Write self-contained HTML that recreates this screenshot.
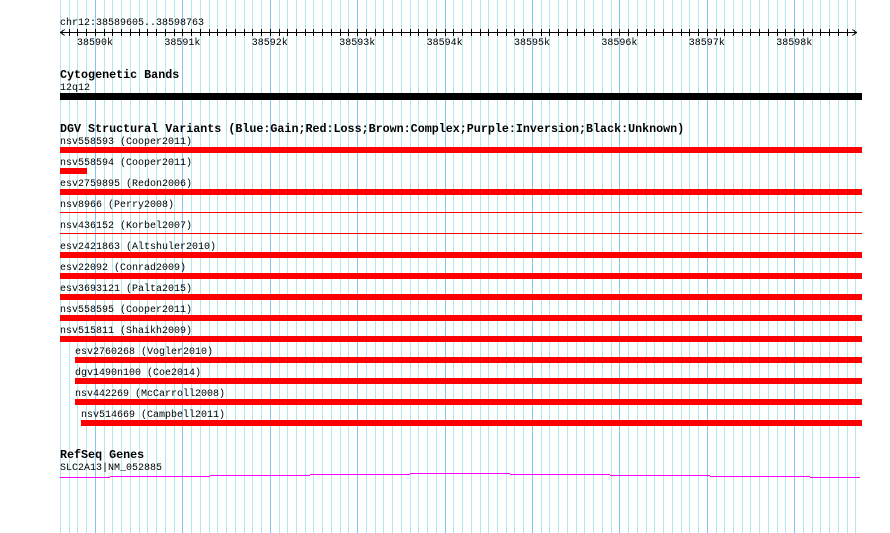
<!DOCTYPE html>
<html><head><meta charset="utf-8"><style>
html,body{margin:0;padding:0;background:#fff;}
svg{display:block;}
text{font-family:"Liberation Mono","DejaVu Sans Mono",monospace;font-size:10px;fill:#000;}
.b{font-weight:bold;font-size:11.7px;}
</style></head><body>
<svg width="890" height="533" viewBox="0 0 890 533" xmlns="http://www.w3.org/2000/svg" shape-rendering="crispEdges">
<path stroke="#aee9ee" stroke-width="1" fill="none" d="M60.5 0V533M69.5 0V533M77.5 0V533M86.5 0V533M104.5 0V533M112.5 0V533M121.5 0V533M130.5 0V533M139.5 0V533M147.5 0V533M156.5 0V533M165.5 0V533M174.5 0V533M191.5 0V533M200.5 0V533M209.5 0V533M217.5 0V533M226.5 0V533M235.5 0V533M244.5 0V533M252.5 0V533M261.5 0V533M279.5 0V533M287.5 0V533M296.5 0V533M305.5 0V533M313.5 0V533M322.5 0V533M331.5 0V533M340.5 0V533M348.5 0V533M366.5 0V533M375.5 0V533M383.5 0V533M392.5 0V533M401.5 0V533M410.5 0V533M418.5 0V533M427.5 0V533M436.5 0V533M453.5 0V533M462.5 0V533M471.5 0V533M480.5 0V533M488.5 0V533M497.5 0V533M506.5 0V533M514.5 0V533M523.5 0V533M541.5 0V533M549.5 0V533M558.5 0V533M567.5 0V533M576.5 0V533M584.5 0V533M593.5 0V533M602.5 0V533M611.5 0V533M628.5 0V533M637.5 0V533M646.5 0V533M654.5 0V533M663.5 0V533M672.5 0V533M681.5 0V533M689.5 0V533M698.5 0V533M716.5 0V533M724.5 0V533M733.5 0V533M742.5 0V533M750.5 0V533M759.5 0V533M768.5 0V533M777.5 0V533M785.5 0V533M803.5 0V533M812.5 0V533M820.5 0V533M829.5 0V533M838.5 0V533M847.5 0V533M855.5 0V533"/>
<path stroke="#80c8ea" stroke-width="1" fill="none" d="M95.5 0V533M182.5 0V533M270.5 0V533M357.5 0V533M445.5 0V533M532.5 0V533M619.5 0V533M707.5 0V533M794.5 0V533"/>
<text x="60" y="25">chr12:38589605..38598763</text>
<path stroke="#000" stroke-width="1" fill="none" d="M60 32.5H857M69.5 29V36M77.5 29V36M86.5 29V36M95.5 29V36M104.5 29V36M112.5 29V36M121.5 29V36M130.5 29V36M139.5 29V36M147.5 29V36M156.5 29V36M165.5 29V36M174.5 29V36M182.5 29V36M191.5 29V36M200.5 29V36M209.5 29V36M217.5 29V36M226.5 29V36M235.5 29V36M244.5 29V36M252.5 29V36M261.5 29V36M270.5 29V36M279.5 29V36M287.5 29V36M296.5 29V36M305.5 29V36M313.5 29V36M322.5 29V36M331.5 29V36M340.5 29V36M348.5 29V36M357.5 29V36M366.5 29V36M375.5 29V36M383.5 29V36M392.5 29V36M401.5 29V36M410.5 29V36M418.5 29V36M427.5 29V36M436.5 29V36M445.5 29V36M453.5 29V36M462.5 29V36M471.5 29V36M480.5 29V36M488.5 29V36M497.5 29V36M506.5 29V36M514.5 29V36M523.5 29V36M532.5 29V36M541.5 29V36M549.5 29V36M558.5 29V36M567.5 29V36M576.5 29V36M584.5 29V36M593.5 29V36M602.5 29V36M611.5 29V36M619.5 29V36M628.5 29V36M637.5 29V36M646.5 29V36M654.5 29V36M663.5 29V36M672.5 29V36M681.5 29V36M689.5 29V36M698.5 29V36M707.5 29V36M716.5 29V36M724.5 29V36M733.5 29V36M742.5 29V36M750.5 29V36M759.5 29V36M768.5 29V36M777.5 29V36M785.5 29V36M794.5 29V36M803.5 29V36M812.5 29V36M820.5 29V36M829.5 29V36M838.5 29V36M847.5 29V36M60.5 32.5L64.5 29.5M60.5 32.5L64.5 35.5M856.5 32.5L852.5 29.5M856.5 32.5L852.5 35.5"/>
<g text-anchor="middle">
<text x="95" y="45">38590k</text><text x="182.4" y="45">38591k</text><text x="269.8" y="45">38592k</text>
<text x="357.2" y="45">38593k</text><text x="444.6" y="45">38594k</text><text x="532" y="45">38595k</text>
<text x="619.4" y="45">38596k</text><text x="706.8" y="45">38597k</text><text x="794.2" y="45">38598k</text>
</g>
<text class="b" x="60" y="78">Cytogenetic Bands</text>
<text x="60" y="90">12q12</text>
<rect x="60" y="93" width="802" height="7" fill="#000"/>
<text class="b" x="60" y="132">DGV Structural Variants (Blue:Gain;Red:Loss;Brown:Complex;Purple:Inversion;Black:Unknown)</text>
<g fill="#ff0000">
<text x="60" y="144">nsv558593 (Cooper2011)</text><rect x="60" y="147" width="802" height="6"/>
<text x="60" y="165">nsv558594 (Cooper2011)</text><rect x="60" y="168" width="27" height="6"/>
<text x="60" y="186">esv2759895 (Redon2006)</text><rect x="60" y="189" width="802" height="6"/>
<text x="60" y="207">nsv8966 (Perry2008)</text><rect x="60" y="212" width="802" height="1"/>
<text x="60" y="228">nsv436152 (Korbel2007)</text><rect x="60" y="233" width="802" height="1"/>
<text x="60" y="249">esv2421863 (Altshuler2010)</text><rect x="60" y="252" width="802" height="6"/>
<text x="60" y="270">esv22092 (Conrad2009)</text><rect x="60" y="273" width="802" height="6"/>
<text x="60" y="291">esv3693121 (Palta2015)</text><rect x="60" y="294" width="802" height="6"/>
<text x="60" y="312">nsv558595 (Cooper2011)</text><rect x="60" y="315" width="802" height="6"/>
<text x="60" y="333">nsv515811 (Shaikh2009)</text><rect x="60" y="336" width="802" height="6"/>
<text x="75" y="354">esv2760268 (Vogler2010)</text><rect x="75" y="357" width="787" height="6"/>
<text x="75" y="375">dgv1490n100 (Coe2014)</text><rect x="75" y="378" width="787" height="6"/>
<text x="75" y="396">nsv442269 (McCarroll2008)</text><rect x="75" y="399" width="787" height="6"/>
<text x="81" y="417">nsv514669 (Campbell2011)</text><rect x="81" y="420" width="781" height="6"/>
</g>
<text class="b" x="60" y="458">RefSeq Genes</text>
<text x="60" y="470">SLC2A13|NM_052885</text>
<path stroke="#ff00ff" stroke-width="1" fill="none" d="M60 477.5H110M110 476.5H210M210 475.5H310M310 474.5H410M410 473.5H510M510 474.5H610M610 475.5H710M710 476.5H810M810 477.5H860"/>
</svg>
</body></html>
